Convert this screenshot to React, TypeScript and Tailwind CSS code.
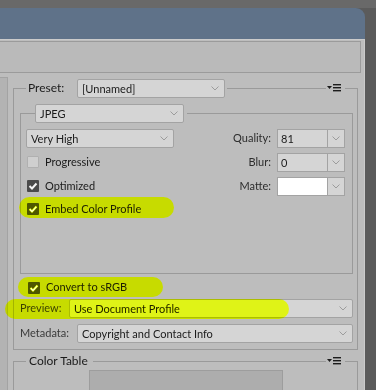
import React from "react";

const Chevron = () => (
  <svg width="8" height="5" viewBox="0 0 8 5" className="shrink-0">
    <path d="M0.5 0.5 L4 4 L7.5 0.5" fill="none" stroke="#9c9c9c" strokeWidth="1" />
  </svg>
);

const MenuIcon = () => (
  <svg width="15" height="8" viewBox="0 0 15 8" className="shrink-0">
    <path d="M0 2 L5 2 L2.5 5 Z" fill="#1c1c1c" />
    <rect x="6" y="0" width="8" height="1.4" fill="#1c1c1c" />
    <rect x="6" y="3" width="8" height="1.4" fill="#1c1c1c" />
    <rect x="6" y="6" width="8" height="1.4" fill="#1c1c1c" />
  </svg>
);

const Dropdown = ({ text, className }: { text: string; className: string }) => (
  <div className={`flex items-center h-[19px] bg-[#d5d5d5] border border-[#a3a3a3] rounded-[2px] ${className}`}>
    <span className="flex-1 pl-[4px] whitespace-nowrap leading-[17px]">{text}</span>
    <span className="mr-[5px] flex items-center">
      <Chevron />
    </span>
  </div>
);

const SplitDropdown = ({ text, white }: { text?: string; white?: boolean }) => (
  <div className="flex h-[19px] w-[68px] bg-[#d5d5d5] border border-[#a3a3a3]">
    <div className={`flex-1 flex items-center pl-[3px] leading-[17px] ${white ? "bg-white" : ""}`}>{text}</div>
    <div className="w-[17px] border-l border-[#a3a3a3] flex items-center justify-center">
      <Chevron />
    </div>
  </div>
);

const Checkbox = ({ checked }: { checked?: boolean }) =>
  checked ? (
    <div className="w-[12px] h-[12px] ml-[1px] rounded-[1px] bg-[#4a4a4a] flex items-center justify-center shrink-0">
      <svg width="10" height="10" viewBox="0 0 10 10">
        <path d="M1.5 5 L4 7.5 L8.5 2.5" fill="none" stroke="#f4f4f4" strokeWidth="2" />
      </svg>
    </div>
  ) : (
    <div className="w-[12px] h-[12px] ml-[1px] rounded-[1px] bg-[#cfcfcf] border border-[#b0b0b0] shrink-0" />
  );

// highlighter marks laid over the panel
const Marker = ({ className }: { className: string }) => (
  <div className={`absolute rounded-full bg-[#c8dc00] mix-blend-color pointer-events-none ${className}`} />
);

export default function App() {
  return (
    <div
      className="w-[376px] h-[390px] overflow-hidden bg-[#5b5b5b] flex flex-col text-[11px] text-[#1b1b1b]"
      style={{ fontFamily: "Lato, 'Noto Sans', sans-serif" }}
    >
      <div className="h-[8px] bg-[#696969] shrink-0" />
      <div className="flex flex-1 min-h-0">
        <div className="w-[365px] flex flex-col rounded-tr-[9px] overflow-hidden">
          <div className="h-[31px] bg-[#5f7289] shrink-0" />
          <div className="flex-1 bg-[#bdbdbd] border-t border-r border-[#cbcbcb] flex flex-col">
            <div className="mt-[1px] -ml-[2px] w-[363px] h-[32px] border border-[#9b9b9b] bg-[#bababa]" />

            <div className="mt-[4px] flex flex-1">
              <div className="w-[8px] border-t border-r border-[#a3a3a3] bg-[#b3b3b3]" />

              <div className="pl-[5px] pt-[1px] flex flex-col">
                {/* Preset group */}
                <div className="w-[345px] flex flex-col">
                  <div className="flex items-center h-[20px]">
                    <div className="w-[13px] h-[10px] self-end border-l border-t border-[#9a9a9a]" />
                    <span className="ml-[2px] w-[49px] text-[12px]">Preset:</span>
                    <Dropdown text="[Unnamed]" className="w-[148px]" />
                    <div className="ml-[2px] mr-[1px] flex-1 h-px bg-[#9a9a9a]" />
                    <MenuIcon />
                    <div className="ml-[3px] w-[13px] h-[10px] self-end border-r border-t border-[#9a9a9a]" />
                  </div>

                  <div className="border-l border-r border-b border-[#9a9a9a] pl-[6px] pr-[4px] pt-[5px] pb-[6px]">
                    {/* JPEG group */}
                    <div className="flex flex-col">
                      <div className="flex items-center h-[20px]">
                        <div className="w-[15px] h-[10px] self-end border-l border-t border-[#9a9a9a]" />
                        <Dropdown text="JPEG" className="w-[149px]" />
                        <div className="ml-[3px] flex-1 h-[10px] self-end border-t border-r border-[#9a9a9a]" />
                      </div>
                      <div className="h-[151px] border-l border-r border-b border-[#9a9a9a] pt-[3px] pl-[5px] pr-[7px]">
                        <div className="grid grid-cols-[148px_1fr]">
                          <div className="h-[24px] flex items-center">
                            <Dropdown text="Very High" className="w-[148px]" />
                          </div>
                          <div className="h-[24px] flex items-center justify-end">
                            <span className="mr-[6px] text-[#2c2c2c]">Quality:</span>
                            <SplitDropdown text="81" />
                          </div>

                          <div className="h-[24px] flex items-center">
                            <Checkbox />
                            <span className="ml-[6px]">Progressive</span>
                          </div>
                          <div className="h-[24px] flex items-center justify-end">
                            <span className="mr-[6px] text-[#2c2c2c]">Blur:</span>
                            <SplitDropdown text="0" />
                          </div>

                          <div className="h-[24px] flex items-center">
                            <Checkbox checked />
                            <span className="ml-[6px]">Optimized</span>
                          </div>
                          <div className="h-[24px] flex items-center justify-end">
                            <span className="mr-[6px] text-[#2c2c2c]">Matte:</span>
                            <SplitDropdown white />
                          </div>

                          <div className="relative h-[22px] flex items-center">
                            <Checkbox checked />
                            <span className="ml-[6px]">Embed Color Profile</span>
                            <Marker className="left-[-7px] top-[-1px] w-[155px] h-[21px]" />
                          </div>
                        </div>
                      </div>
                    </div>

                    <div className="relative mt-[3px] h-[21px] flex items-center">
                      <div className="ml-[7px] flex items-center">
                        <Checkbox checked />
                        <span className="ml-[6px]">Convert to sRGB</span>
                      </div>
                      <Marker className="left-[-2px] top-0 w-[145px] h-[20px]" />
                    </div>

                    <div className="relative mt-[1px] flex items-center">
                      <span className="w-[49px] text-[#3a3a3a]">Preview:</span>
                      <Dropdown text="Use Document Profile" className="flex-1" />
                      <Marker className="left-[-15px] top-0 w-[284px] h-[20px]" />
                    </div>

                    <div className="mt-[6px] flex items-center">
                      <span className="w-[57px] text-[#3a3a3a]">Metadata:</span>
                      <Dropdown text="Copyright and Contact Info" className="flex-1" />
                    </div>
                  </div>
                </div>

                {/* Color Table group */}
                <div className="mt-[1px] w-[345px] flex flex-col">
                  <div className="flex items-center h-[20px]">
                    <div className="w-[13px] h-[10px] self-end border-l border-t border-[#9a9a9a]" />
                    <span className="ml-[3px] text-[12px]">Color Table</span>
                    <div className="ml-[5px] mr-[1px] flex-1 h-px bg-[#9a9a9a]" />
                    <MenuIcon />
                    <div className="ml-[3px] w-[13px] h-[10px] self-end border-r border-t border-[#9a9a9a]" />
                  </div>
                  <div className="h-[40px] border-l border-r border-[#9a9a9a]">
                    <div className="-mt-[1px] ml-[75px] w-[194px] h-[40px] bg-[#adadad] border border-[#9d9d9d]" />
                  </div>
                </div>
              </div>
            </div>
          </div>
        </div>
      </div>
    </div>
  );
}
